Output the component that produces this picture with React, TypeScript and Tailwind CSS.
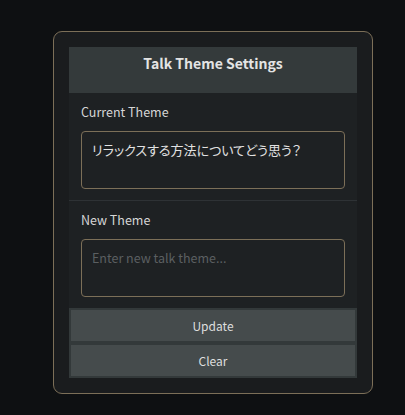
import React, { useState } from "react";

export default function App() {
  const [current, setCurrent] = useState("リラックスする方法についてどう思う？");
  const [next, setNext] = useState("");

  const font = { fontFamily: '"Noto Sans CJK JP", "Noto Sans", sans-serif' };

  return (
    <div className="min-h-[415px] w-full bg-[#0e1012] pt-[31px] pl-[53px]" style={font}>
      <div className="w-[320px] rounded-[9px] border border-[#7c6f58] bg-[#1a1c1e] p-[15px]">
        <div className="h-[46px] bg-[#343a3b] pt-[6px] text-center text-[14px] font-bold leading-5 text-[#e4e4e4]">
          Talk Theme Settings
        </div>
        <div className="bg-[#1e2123]">
          <div className="px-3 pt-[9px] pb-[11px]">
            <div className="mb-[9px] text-[12.5px] leading-5 text-[#d6d6d6]">Current Theme</div>
            <textarea
              className="block h-[58px] w-full resize-none rounded-[4px] border border-[#7c6f58] bg-[#1e2123] px-[10px] py-[8px] text-[13px] leading-5 text-[#e2e2e2] outline-none [font-feature-settings:'palt']"
              value={current}
              onChange={(e) => setCurrent(e.target.value)}
            />
          </div>
          <div className="h-px bg-[#2e3235]" />
          <div className="px-3 pt-[9px] pb-[11px]">
            <div className="mb-[9px] text-[12.5px] leading-5 text-[#d6d6d6]">New Theme</div>
            <textarea
              className="block h-[58px] w-full resize-none rounded-[4px] border border-[#7c6f58] bg-[#1e2123] px-[10px] py-[8px] text-[12.5px] leading-5 text-[#e2e2e2] outline-none placeholder:text-[#5b5f61]"
              placeholder="Enter new talk theme..."
              value={next}
              onChange={(e) => setNext(e.target.value)}
            />
          </div>
        </div>
        <div className="flex flex-col">
          <button
            className="h-[35px] border-2 border-[#33393a] bg-[#454b4c] text-[12px] text-[#dedede]"
            onClick={() => next && setCurrent(next)}
          >
            Update
          </button>
          <button
            className="h-[35px] border-2 border-[#33393a] bg-[#454b4c] text-[12px] text-[#dedede]"
            onClick={() => setNext("")}
          >
            Clear
          </button>
        </div>
      </div>
    </div>
  );
}
